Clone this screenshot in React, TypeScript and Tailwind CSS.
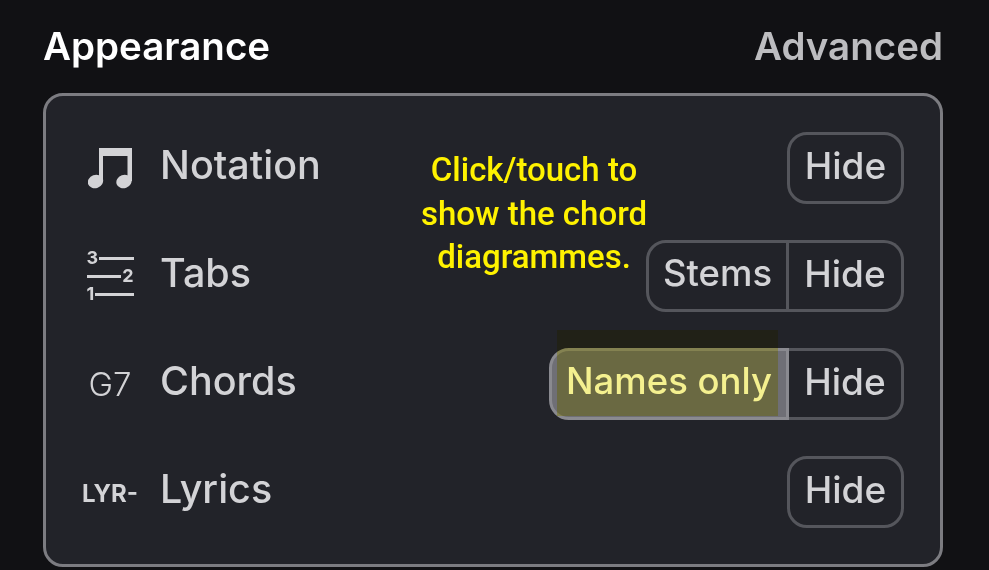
import React from 'react';

function NoteIcon() {
    return (
        <svg viewBox="0 0 44 41" className="w-[44px] h-[41px] fill-[#d3d3d6]">
            <path d="M11 0H44V8H15V33H11ZM39.5 8H44V33H39.5Z" />
            <ellipse cx="7.5" cy="33.5" rx="7.8" ry="6.6" transform="rotate(-20 7.5 33.5)" />
            <ellipse cx="36" cy="33.5" rx="7.8" ry="6.6" transform="rotate(-20 36 33.5)" />
        </svg>
    );
}

function TabsIcon() {
    return (
        <div className="w-[47px] font-bold text-[18px] leading-[18px] text-[#d3d3d6]">
            <div className="flex items-center gap-[1px]">
                <span>3</span>
                <div className="h-[3px] flex-1 bg-[#d3d3d6]"></div>
            </div>
            <div className="flex items-center gap-[1px]">
                <div className="h-[3px] flex-1 bg-[#d3d3d6]"></div>
                <span>2</span>
            </div>
            <div className="flex items-center gap-[1px]">
                <span>1</span>
                <div className="h-[3px] flex-1 bg-[#d3d3d6]"></div>
            </div>
        </div>
    );
}

function Row({ icon, label, children }: { icon: React.ReactNode; label: string; children: React.ReactNode }) {
    return (
        <div className="flex items-center h-[72px]">
            <div className="w-[60px] flex justify-center items-center mr-[20px]">{icon}</div>
            <span className="text-[39.5px] font-medium text-[#d3d3d6] leading-none pb-[5px]">{label}</span>
            <div className="ml-auto flex">{children}</div>
        </div>
    );
}

function HideButton({ joined }: { joined?: boolean }) {
    return (
        <div className={`h-[72px] pb-[5px] flex items-center justify-center border-[3px] border-[#55565c] text-[37px] font-medium text-[#d3d3d6] ${joined ? 'w-[115px] rounded-r-[20px] border-l-0' : 'w-[117px] rounded-[20px]'}`}>
            Hide
        </div>
    );
}

export default function App() {
    return (
        <div className="relative w-[989px] h-[570px] overflow-hidden bg-[#111114] font-['Inter',sans-serif]">
            <div className="flex items-center justify-between h-[93px] pl-[43px] pr-[46px]">
                <span className="text-[38.5px] font-semibold text-white">Appearance</span>
                <span className="text-[38.5px] font-semibold text-[#bdbdc0]">Advanced</span>
            </div>

            <div className="ml-[43px] w-[900px] h-[474px] rounded-[20px] border-[3px] border-[#7c7c81] bg-[#222329] pl-[34px] pr-[36px] pt-[36px] pb-[35px] flex flex-col gap-[36px]">
                <Row icon={<NoteIcon />} label="Notation">
                    <HideButton />
                </Row>
                <Row icon={<TabsIcon />} label="Tabs">
                    <div className="h-[72px] w-[143px] pb-[5px] flex items-center justify-center rounded-l-[20px] border-[3px] border-[#55565c] text-[36.5px] font-medium text-[#d3d3d6]">
                        Stems
                    </div>
                    <HideButton joined />
                </Row>
                <Row icon={<span className="text-[33px] font-light text-[#d3d3d6] pt-[2px]">G7</span>} label="Chords">
                    <div className="h-[72px] w-[240px] pb-[5px] flex items-center justify-center rounded-l-[20px] border-[3px] border-[#8a8a90] bg-[#6f6f76] text-[36.5px] font-medium text-white">
                        Names only
                    </div>
                    <HideButton joined />
                </Row>
                <Row icon={<span className="text-[24px] font-bold text-[#d3d3d6] whitespace-nowrap pt-[3px]">LYR-</span>} label="Lyrics">
                    <HideButton />
                </Row>
            </div>

            {/* tooltip and highlight over the panel */}
            <div className="absolute left-[557px] top-[330px] w-[221px] h-[86px] bg-[#f4f08f] mix-blend-multiply"></div>
            <div className="absolute left-[404px] top-[148px] w-[260px] text-center text-[33px] leading-[43.5px] font-medium text-[#fff200] font-['Roboto',sans-serif]">
                Click/touch to<br />show the chord<br />diagrammes.
            </div>
        </div>
    );
}
